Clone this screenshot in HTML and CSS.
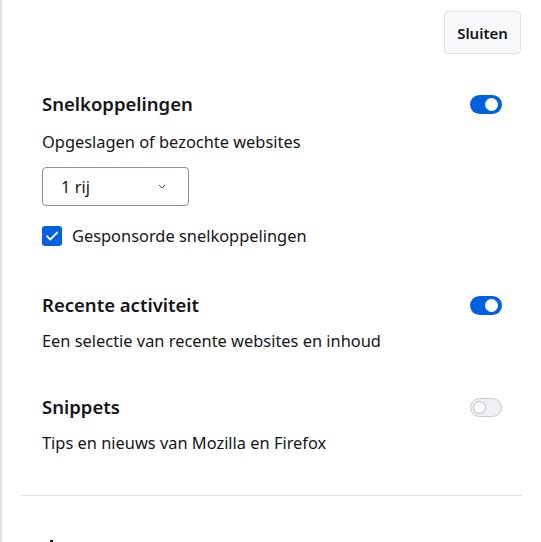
FILE: index.html
```html
<!DOCTYPE html>
<html lang="nl">
<head>
<meta charset="utf-8">
<title>Nieuw tabblad aanpassen</title>
<link rel="stylesheet" href="styles.css">
</head>
<body>
<aside class="panel">
  <div class="topbar">
    <button class="close-btn" type="button">Sluiten</button>
  </div>

  <section class="setting first">
    <div class="setting-head">
      <h2 class="title">Snelkoppelingen</h2>
      <span class="toggle on" role="switch" aria-checked="true"><span class="knob"></span></span>
    </div>
    <p class="desc">Opgeslagen of bezochte websites</p>
    <div class="select">
      <span>1 rij</span>
      <svg class="chev" width="8" height="5" viewBox="0 0 8 5"><path d="M1 1l3 3 3-3" fill="none" stroke="#5b5b66" stroke-width="1"/></svg>
    </div>
    <label class="check-row">
      <span class="checkbox"><svg width="16" height="16" viewBox="0 0 16 16"><path d="M3 8.2l3.3 3.3L13.2 4.5" fill="none" stroke="#fff" stroke-width="1.8" stroke-linecap="round" stroke-linejoin="round"/></svg></span>
      <span>Gesponsorde snelkoppelingen</span>
    </label>
  </section>

  <section class="setting second">
    <div class="setting-head">
      <h2 class="title">Recente activiteit</h2>
      <span class="toggle on" role="switch" aria-checked="true"><span class="knob"></span></span>
    </div>
    <p class="desc">Een selectie van recente websites en inhoud</p>
  </section>

  <section class="setting third">
    <div class="setting-head">
      <h2 class="title">Snippets</h2>
      <span class="toggle off" role="switch" aria-checked="false"><span class="knob"></span></span>
    </div>
    <p class="desc">Tips en nieuws van Mozilla en Firefox</p>
  </section>

  <hr class="divider">

  <div class="next-mark" aria-hidden="true"></div>
</aside>
</body>
</html>
```

FILE: styles.css
```css
* { box-sizing: border-box; }

html, body {
  margin: 0;
  padding: 0;
  background: #fff;
}

body {
  font-family: "Noto Sans", "Open Sans", sans-serif;
  color: #15141a;
  overflow: hidden;
  height: 542px;
}

.panel {
  border-left: 2px solid #e3e3e6;
  padding: 0 19px 0 18px;
  min-height: 542px;
}

.topbar {
  display: flex;
  justify-content: flex-end;
  padding-top: 11px;
}

.close-btn {
  font-family: inherit;
  font-size: 15px;
  font-weight: 600;
  color: #15141a;
  background: #f9f9fb;
  border: 1px solid #e0e0e6;
  border-radius: 4px;
  height: 43px;
  width: 77px;
  margin-right: 1px;
  padding: 0;
}

.setting {
  padding: 0 20px 0 22px;
}

.setting.first { margin-top: 38px; }
.setting.second { margin-top: 46px; }
.setting.third { margin-top: 43px; }

.setting-head {
  display: flex;
  justify-content: space-between;
  align-items: center;
  height: 24px;
}

.title {
  margin: 0;
  font-size: 18.5px;
  font-weight: 600;
  line-height: 24px;
}

.desc {
  margin: 15px 0 0;
  font-size: 16.4px;
  line-height: 22px;
}

.setting.second .desc,
.setting.third .desc { margin-top: 13px; }

.toggle {
  position: relative;
  width: 32px;
  height: 19px;
  border-radius: 10px;
  flex-shrink: 0;
}

.toggle.on { background: #0061e0; }
.toggle.off {
  background: #f0f0f4;
  border: 1px solid #c9c9d0;
}

.knob {
  position: absolute;
  top: 3px;
  width: 13px;
  height: 13px;
  border-radius: 50%;
  background: #fff;
}

.toggle.on .knob { right: 4px; }
.toggle.off .knob {
  top: 2px;
  left: 2px;
  border: 1px solid #b8b8c0;
}

.select {
  margin-top: 14px;
  width: 147px;
  height: 39px;
  border: 1px solid #8f8f9d;
  border-radius: 4px;
  display: flex;
  align-items: center;
  justify-content: space-between;
  padding: 0 22px 0 18px;
  font-size: 16.4px;
}

.chev { display: block; margin-top: -1px; }

.check-row {
  display: flex;
  align-items: center;
  gap: 10px;
  margin-top: 19px;
  font-size: 16.4px;
  line-height: 22px;
}

.checkbox {
  width: 20px;
  height: 20px;
  border-radius: 3px;
  background: #0061e0;
  display: flex;
  align-items: center;
  justify-content: center;
}

.divider {
  border: 0;
  border-top: 1px solid #e0e0e6;
  margin: 41px 0 0;
}

.next-mark {
  margin: 44px 0 0 30px;
  width: 3px;
  height: 3px;
  background: #15141a;
}
```
